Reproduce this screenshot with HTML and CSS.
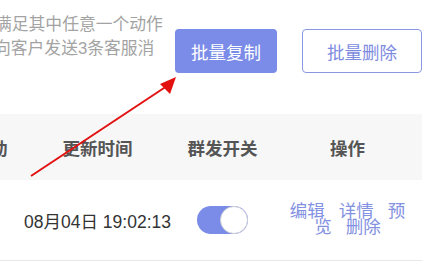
FILE: index.html
```html
<!DOCTYPE html>
<html lang="zh">
<head>
<meta charset="utf-8">
<link rel="stylesheet" href="styles.css">
</head>
<body>
<div class="page">
  <div class="top">
    <div class="desc">
      <div class="line">满足其中任意一个动作</div>
      <div class="line line2">向客户发送3条客服消</div>
    </div>
    <button class="btn btn-primary">批量复制</button>
    <button class="btn btn-outline">批量删除</button>
  </div>
  <div class="table">
    <div class="tr thead">
      <div class="td">触发行动</div>
      <div class="td">更新时间</div>
      <div class="td">群发开关</div>
      <div class="td">操作</div>
      <div class="td"></div>
    </div>
    <div class="tr trow">
      <div class="td"></div>
      <div class="td"><span class="date">08月04日 19:02:13</span></div>
      <div class="td"><span class="switch"><span class="knob"></span></span></div>
      <div class="td"><div class="ops"><a class="op">编辑</a><a class="op">详情</a><a class="op">预览</a><a class="op">删除</a></div></div>
      <div class="td"></div>
    </div>
  </div>
  <svg class="arrow" width="431" height="262" viewBox="0 0 431 262">
    <line x1="31" y1="176" x2="167" y2="86" stroke="#e31010" stroke-width="2"/>
    <polygon points="176,77 160,84 170,94" fill="#e31010"/>
  </svg>
</div>
</body>
</html>
```

FILE: styles.css
```css
html, body {
  margin: 0;
  padding: 0;
  background: #fff;
}
body {
  width: 431px;
  height: 262px;
  overflow: hidden;
  font-family: "Liberation Sans", "Noto Sans CJK SC", sans-serif;
}
.page {
  position: relative;
  width: 431px;
  height: 262px;
  overflow: hidden;
}
.top {
  display: flex;
  align-items: flex-start;
  height: 114px;
}
.desc {
  width: 180px;
  margin-left: -5px;
  margin-top: 13px;
  font-size: 16.8px;
  line-height: 24px;
  color: #a3a3a3;
  white-space: nowrap;
}
.line2 {
  margin-left: -1px;
}
.btn {
  box-sizing: border-box;
  height: 44px;
  margin-top: 29px;
  border-radius: 4px;
  font-family: "Noto Sans CJK SC", sans-serif;
  font-size: 17.5px;
  padding: 0;
  cursor: pointer;
}
.btn-primary {
  width: 102px;
  background: #7b8ce8;
  border: none;
  color: #fff;
}
.btn-outline {
  width: 120px;
  margin-left: 25px;
  background: #fff;
  border: 1px solid #8a98e2;
  color: #7d8bdf;
}
.table {
  margin-left: -90px;
  width: 512px;
}
.tr {
  display: grid;
  grid-template-columns: 125px 125px 125px 125px 12px;
  align-items: center;
}
.thead {
  height: 66px;
  background: #f7f7f7;
  font-family: "Noto Sans CJK SC", sans-serif;
  font-weight: bold;
  font-size: 17.5px;
  color: #555;
}
.td {
  display: flex;
  justify-content: center;
  text-align: center;
  white-space: nowrap;
}
.trow {
  height: 80px;
  border-bottom: 1px solid #e8e8e8;
}
.date {
  font-size: 17.5px;
  color: #333;
  white-space: nowrap;
}
.switch {
  display: inline-block;
  position: relative;
  width: 51px;
  height: 28px;
  border-radius: 14px;
  background: #7b8ce8;
}
.knob {
  position: absolute;
  right: 0;
  top: 0;
  box-sizing: border-box;
  width: 28px;
  height: 28px;
  border-radius: 50%;
  background: #fff;
  border: 1px solid #cfcfd6;
}
.ops {
  width: 125px;
  white-space: normal;
  font-family: "Noto Sans CJK SC", sans-serif;
  font-size: 17.5px;
  line-height: 16.5px;
  color: #8391e2;
  text-align: center;
  padding-bottom: 4px;
}
.op + .op {
  margin-left: 14px;
}
.arrow {
  position: absolute;
  left: 0;
  top: 0;
  pointer-events: none;
}
```
